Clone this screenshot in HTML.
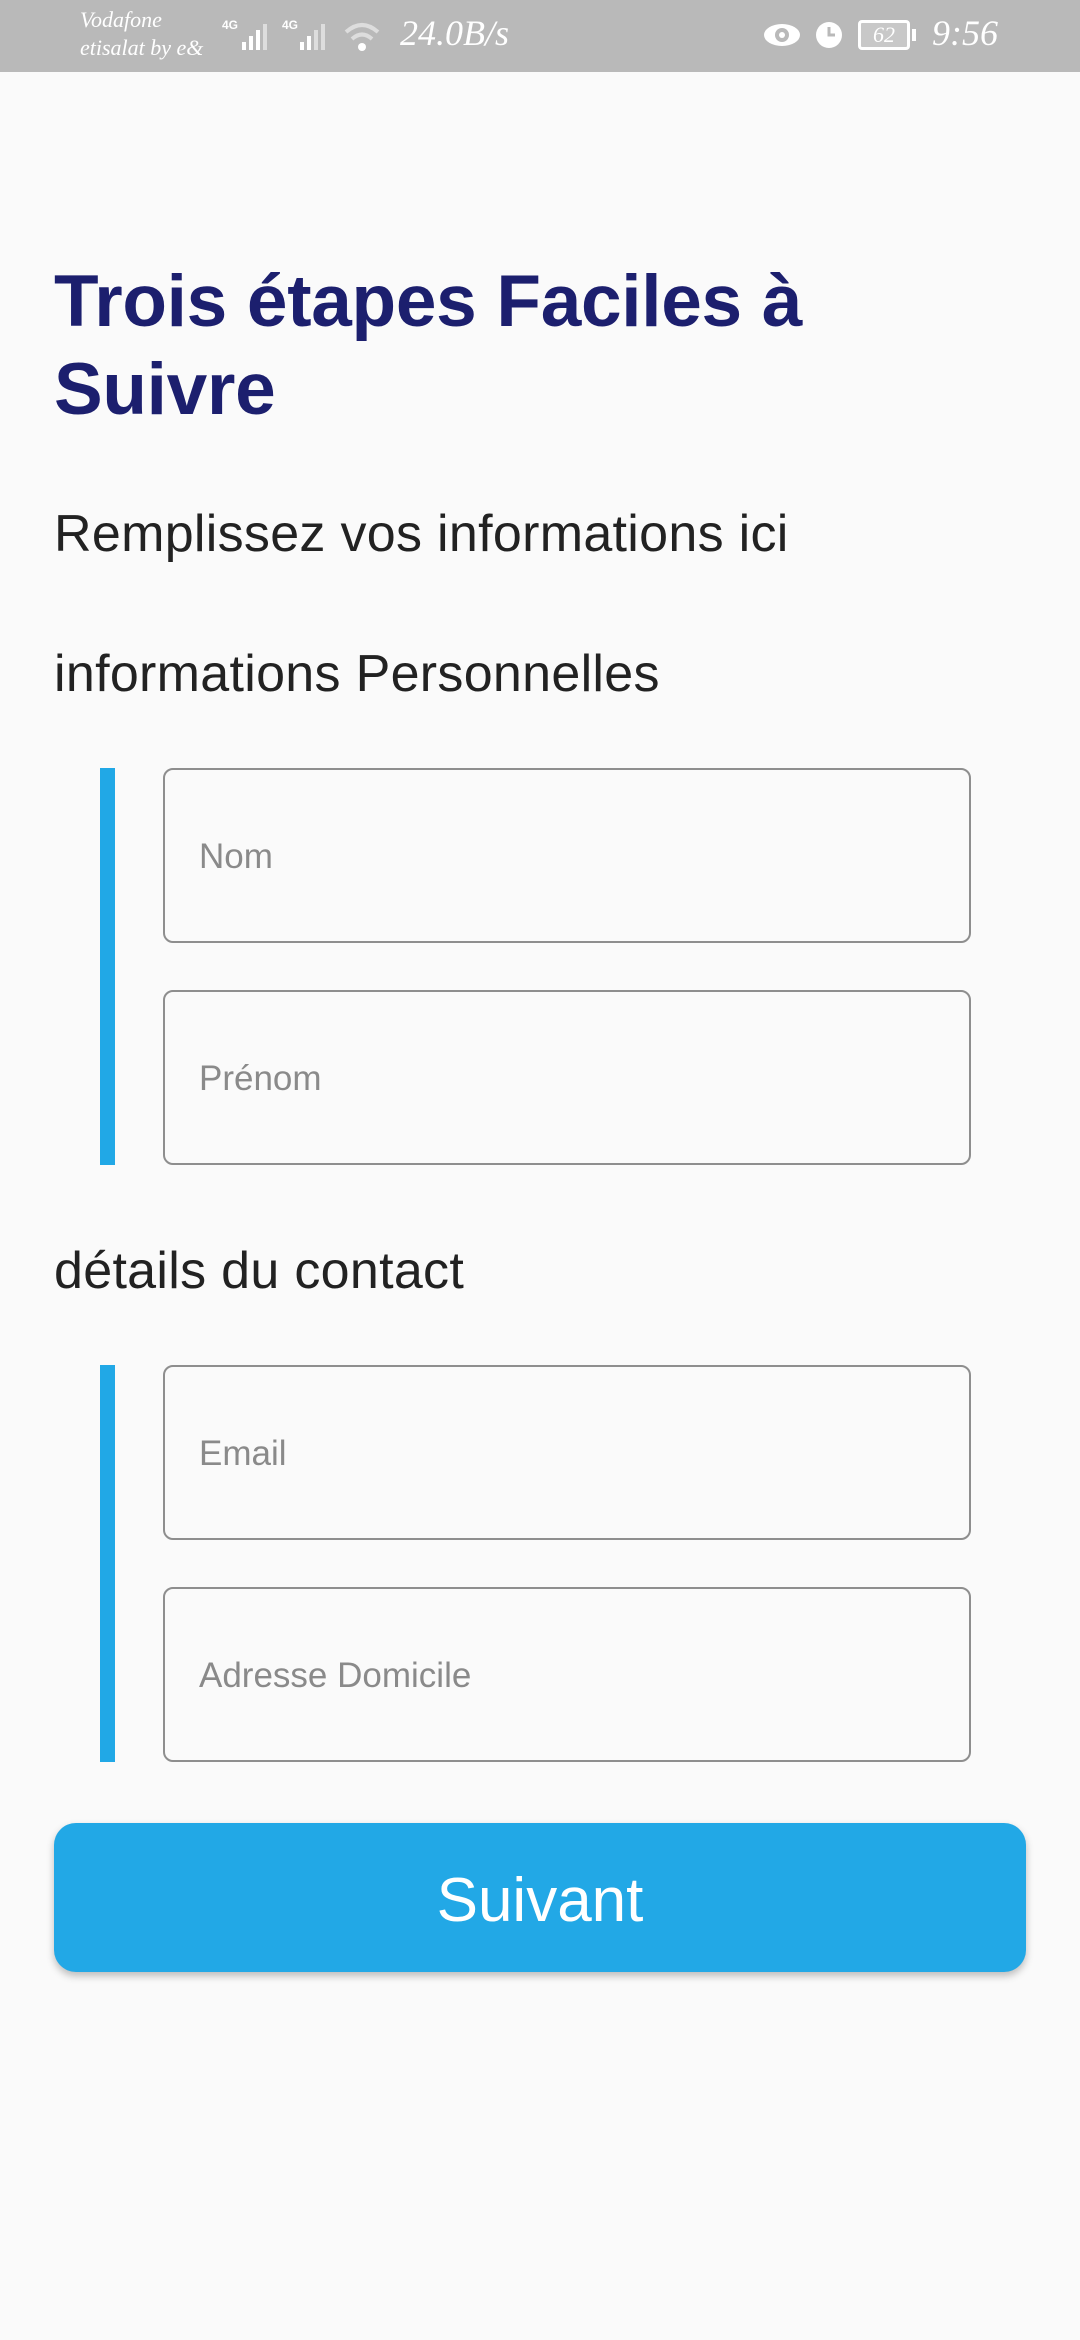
<!DOCTYPE html>
<html><head><meta charset="utf-8"><style>
*{margin:0;padding:0;box-sizing:border-box}
body{width:1080px;height:2340px;background:#fafafa;font-family:"Liberation Sans",sans-serif;position:relative;overflow:hidden}
.sb{position:absolute;left:0;top:0;width:1080px;height:72px;background:#b9b9b9;color:#fff}
.abs{position:absolute}
.h1{left:54px;top:258px;font-size:73px;font-weight:bold;color:#1c1f6e;line-height:88px;letter-spacing:-0.3px}
.t{left:54px;font-size:52px;color:#222;line-height:60px;letter-spacing:0.3px}
.bar{left:100px;width:15px;background:#21a8e6}
.in{left:163px;width:808px;height:175px;border:2px solid #8e8e8e;border-radius:10px;font-size:35px;color:#8a8a8a;padding-left:34px;line-height:173px}
.btn{left:54px;top:1823px;width:972px;height:149px;background:#22a8e6;border-radius:22px;color:#fff;font-size:62px;text-align:center;line-height:155px;box-shadow:0 4px 8px rgba(0,0,0,.25)}
</style></head><body>
<div class="sb">
<div class="abs" style="left:80px;top:6px;font-family:'Liberation Serif',serif;font-style:italic;font-size:22px;line-height:28px">Vodafone<br>etisalat by e&amp;</div>
<div class="abs" style="left:222px;top:18px;font-size:12px;font-weight:bold">4G</div>
<svg class="abs" style="left:240px;top:20px" width="36" height="32"><rect x="2" y="22" width="4" height="8" fill="#fff"/><rect x="9" y="16" width="4" height="14" fill="#fff"/><rect x="16" y="10" width="4" height="20" fill="#fff"/><rect x="23" y="4" width="4" height="26" fill="#ddd"/></svg>
<div class="abs" style="left:282px;top:18px;font-size:12px;font-weight:bold">4G</div>
<svg class="abs" style="left:298px;top:20px" width="36" height="32"><rect x="2" y="22" width="4" height="8" fill="#fff"/><rect x="9" y="16" width="4" height="14" fill="#fff"/><rect x="16" y="10" width="4" height="20" fill="#ddd"/><rect x="23" y="4" width="4" height="26" fill="#ddd"/></svg>
<svg class="abs" style="left:342px;top:20px" width="40" height="34"><path d="M4 12 Q20 -2 36 12" stroke="#ddd" stroke-width="4" fill="none"/><path d="M10 19 Q20 10 30 19" stroke="#ddd" stroke-width="4" fill="none"/><circle cx="20" cy="27" r="4" fill="#fff"/></svg>
<div class="abs" style="left:400px;top:12px;font-family:'Liberation Serif',serif;font-style:italic;font-size:36px">24.0B/s</div>
<svg class="abs" style="left:762px;top:20px" width="40" height="30"><ellipse cx="20" cy="15" rx="18" ry="11" fill="#fff"/><circle cx="20" cy="15" r="7" fill="#b9b9b9"/><circle cx="20" cy="15" r="3" fill="#fff"/></svg>
<svg class="abs" style="left:812px;top:17px" width="34" height="34"><circle cx="17" cy="18" r="13" fill="#fff"/><path d="M17 10 V18 H23" stroke="#b9b9b9" stroke-width="3" fill="none"/></svg>
<div class="abs" style="left:858px;top:20px;width:52px;height:30px;border:3px solid #fff;border-radius:4px;font-family:'Liberation Serif',serif;font-style:italic;font-size:22px;text-align:center;line-height:24px;background:#c8c8c8">62</div>
<div class="abs" style="left:912px;top:29px;width:4px;height:12px;background:#fff"></div>
<div class="abs" style="left:932px;top:12px;font-family:'Liberation Serif',serif;font-style:italic;font-size:36px">9:56</div>
</div>
<div class="abs h1">Trois étapes Faciles à<br>Suivre</div>
<div class="abs t" style="top:504px">Remplissez vos informations ici</div>
<div class="abs t" style="top:644px">informations Personnelles</div>
<div class="abs bar" style="top:768px;height:397px"></div>
<div class="abs in" style="top:768px">Nom</div>
<div class="abs in" style="top:990px">Prénom</div>
<div class="abs t" style="top:1241px">détails du contact</div>
<div class="abs bar" style="top:1365px;height:397px"></div>
<div class="abs in" style="top:1365px">Email</div>
<div class="abs in" style="top:1587px">Adresse Domicile</div>
<div class="abs btn">Suivant</div>
</body></html>
